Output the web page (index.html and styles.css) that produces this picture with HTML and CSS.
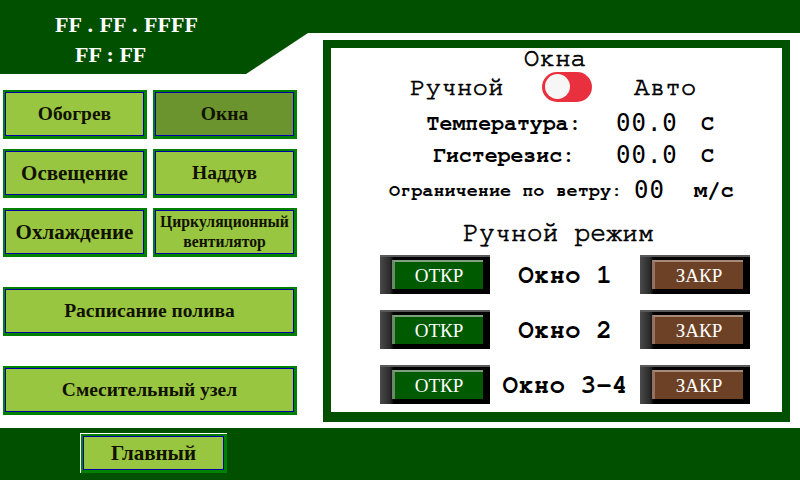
FILE: index.html
```html
<!DOCTYPE html>
<html lang="ru">
<head>
<meta charset="utf-8">
<title>Окна</title>
<link rel="stylesheet" href="styles.css">
</head>
<body>
<div class="screen">
  <div class="main">
    <div class="left">
      <div class="clock">
        <div class="date">FF . FF . FFFF</div>
        <div class="time">FF : FF</div>
      </div>
      <div class="menu">
        <div class="btn"><div class="face">Обогрев</div></div>
        <div class="btn"><div class="face active">Окна</div></div>
        <div class="btn"><div class="face big">Освещение</div></div>
        <div class="btn"><div class="face">Наддув</div></div>
        <div class="btn"><div class="face big">Охлаждение</div></div>
        <div class="btn"><div class="face small">Циркуляционный<br>вентилятор</div></div>
      </div>
      <div class="wide">
        <div class="btn"><div class="face">Расписание полива</div></div>
        <div class="btn"><div class="face">Смесительный узел</div></div>
      </div>
    </div>
    <div class="right">
      <div class="topbar"></div>
      <div class="panel">
        <div class="title">Окна</div>
        <div class="mode">
          <span class="mode-l">Ручной</span>
          <span class="toggle"><span class="knob"></span></span>
          <span class="mode-r">Авто</span>
        </div>
        <div class="param p-temp">
          <span class="plabel">Температура:</span>
          <span class="pval">00.0</span>
          <span class="punit">С</span>
        </div>
        <div class="param p-hyst">
          <span class="plabel">Гистерезис:</span>
          <span class="pval">00.0</span>
          <span class="punit">С</span>
        </div>
        <div class="wind">
          <span class="wlabel">Ограничение по ветру:</span>
          <span class="wval">00</span>
          <span class="wunit">м/с</span>
        </div>
        <div class="subtitle">Ручной режим</div>
        <div class="windows">
          <div class="wrow">
            <div class="wbtn open"><div class="wface">ОТКР</div></div>
            <div class="wname">Окно 1</div>
            <div class="wbtn close"><div class="wface">ЗАКР</div></div>
          </div>
          <div class="wrow">
            <div class="wbtn open"><div class="wface">ОТКР</div></div>
            <div class="wname">Окно 2</div>
            <div class="wbtn close"><div class="wface">ЗАКР</div></div>
          </div>
          <div class="wrow">
            <div class="wbtn open"><div class="wface">ОТКР</div></div>
            <div class="wname">Окно 3-4</div>
            <div class="wbtn close"><div class="wface">ЗАКР</div></div>
          </div>
        </div>
      </div>
    </div>
  </div>
  <div class="footer">
    <div class="btn home"><div class="face home-face">Главный</div></div>
  </div>
</div>
</body>
</html>
```
FILE: styles.css
```css
html, body {
  margin: 0;
  padding: 0;
}
body {
  width: 800px;
  height: 480px;
  overflow: hidden;
  background: #ffffff;
  font-family: "Liberation Serif", "Times New Roman", serif;
}
.screen {
  display: flex;
  flex-direction: column;
  width: 800px;
  height: 480px;
}
.main {
  display: flex;
  height: 428px;
}
.left {
  width: 308px;
  display: flex;
  flex-direction: column;
}
.clock {
  height: 74px;
  flex: none;
  box-sizing: border-box;
  padding-top: 13px;
  background: #005000;
  clip-path: polygon(0 0, 100% 0, 100% 33px, 246px 74px, 0 74px);
  color: #ffffff;
  font-weight: bold;
  font-size: 22px;
  line-height: 24px;
}
.date {
  padding-left: 55px;
  white-space: pre;
  word-spacing: 1px;
}
.time {
  margin-top: 6px;
  padding-left: 75px;
  white-space: pre;
}
.menu {
  display: grid;
  grid-template-columns: 145px 145px;
  grid-auto-rows: 50px;
  column-gap: 5px;
  row-gap: 9px;
  margin: 15px 0 0 2px;
}
.wide {
  display: flex;
  flex-direction: column;
  gap: 29px;
  width: 295px;
  margin: 29px 0 0 2px;
}
.wide .btn {
  height: 50px;
  flex: none;
}
.btn {
  box-sizing: border-box;
  display: flex;
  background: #008000;
  border-top: 1px solid #ffffff;
  border-left: 1px solid #ffffff;
  padding: 2px 3px 3px 2px;
}
.face {
  flex: 1;
  display: flex;
  align-items: center;
  justify-content: center;
  text-align: center;
  border: 1px solid #0000a8;
  background: #99c640;
  color: #111100;
  font-weight: bold;
  font-size: 19.5px;
  line-height: 20px;
}
.face.active {
  background: #6b942e;
}
.face.big {
  font-size: 21px;
}
.face.small {
  font-size: 15.7px;
  line-height: 20px;
}
.right {
  flex: 1;
  display: flex;
  flex-direction: column;
}
.topbar {
  height: 33px;
  background: #005000;
}
.panel {
  flex: 1;
  margin: 7px 10px 6px 15px;
  border: 8px solid #005000;
  border-bottom-width: 10px;
  display: flex;
  flex-direction: column;
  font-family: "Nimbus Mono PS", "Nimbus Mono L", "FreeMono", "Courier New", "Courier", "Liberation Mono", monospace;
  color: #000000;
}
.title {
  height: 21px;
  line-height: 21px;
  font-size: 26px;
  text-align: center;
  padding-right: 3px;
  -webkit-text-stroke: 0.7px #000000;
}
.mode {
  height: 35px;
  display: flex;
  align-items: center;
  padding-left: 79px;
  font-size: 26px;
  -webkit-text-stroke: 0.7px #000000;
}
.mode-l {
  width: 94px;
}
.toggle {
  display: flex;
  align-items: center;
  width: 50px;
  height: 30px;
  margin-left: 38px;
  border-radius: 15px;
  background: #e8303e;
}
.knob {
  width: 25px;
  height: 25px;
  margin-left: 3px;
  border-radius: 50%;
  background: #f6f6f6;
}
.mode-r {
  margin-left: 42px;
}
.param {
  display: flex;
  align-items: center;
  padding-left: 73px;
}
.p-temp {
  margin-top: 4px;
  height: 30px;
}
.p-hyst {
  height: 34px;
}
.plabel {
  width: 200px;
  text-align: center;
  font-weight: bold;
  font-size: 21.5px;
}
.pval, .wval {
  font-family: "DejaVu Sans Mono", monospace;
  font-size: 24px;
  letter-spacing: 1px;
}
.pval {
  width: 85px;
  margin-left: 12px;
}
.punit {
  font-weight: bold;
  font-size: 22px;
}
.wind {
  height: 36px;
  display: flex;
  align-items: center;
  padding-left: 58px;
}
.wlabel {
  font-weight: bold;
  font-size: 18.5px;
}
.wval {
  margin-left: 12px;
}
.wunit {
  margin-left: 29px;
  font-weight: bold;
  font-size: 22px;
}
.subtitle {
  margin-top: 10px;
  height: 30px;
  line-height: 30px;
  font-size: 26.5px;
  text-align: center;
  padding-left: 4px;
  -webkit-text-stroke: 0.7px #000000;
}
.windows {
  margin-top: 7px;
  display: flex;
  flex-direction: column;
  gap: 16px;
  padding-left: 49px;
}
.wrow {
  display: grid;
  grid-template-columns: 110px 150px 110px;
  height: 39px;
}
.wname {
  display: flex;
  align-items: center;
  justify-content: center;
  font-weight: bold;
  font-size: 26px;
}
.wbtn {
  box-sizing: border-box;
  display: flex;
  padding: 3px 7px 5px 12px;
  border-top: 2px solid #5a5a5a;
  background: linear-gradient(to right, #4a4a4a 0, #2a2a2a 10px, #000000 14px, #000000 100%);
}
.wface {
  flex: 1;
  display: flex;
  align-items: center;
  justify-content: center;
  color: #ffffff;
  font-family: "Liberation Serif", "Times New Roman", serif;
  font-size: 19px;
  border-top: 2px solid #7f9f7f;
  border-left: 3px solid #6a8a6a;
}
.open .wface {
  background: #005a00;
}
.close .wface {
  background: #6d4125;
  border-top-color: #a78a78;
  border-left-color: #967060;
}
.footer {
  height: 52px;
  box-sizing: border-box;
  padding: 5px 0 0 80px;
  background: #005000;
}
.home {
  width: 147px;
  height: 40px;
}
.home-face {
  font-size: 21px;
}
```
